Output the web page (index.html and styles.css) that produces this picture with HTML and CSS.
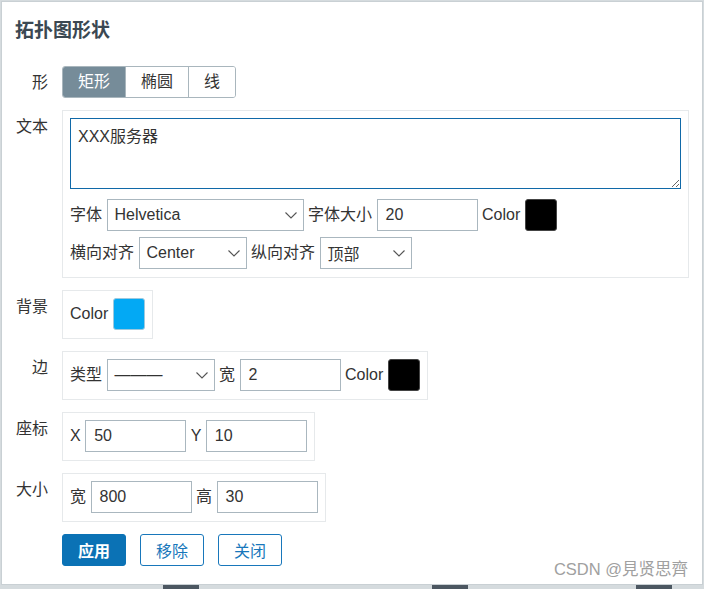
FILE: index.html
```html
<!DOCTYPE html>
<html lang="zh-CN">
<head>
<meta charset="utf-8">
<title>拓扑图形状</title>
<link rel="stylesheet" href="styles.css">
</head>
<body>
<div class="dialog">
  <h2 class="title">拓扑图形状</h2>
  <div class="form">
    <div class="row">
      <div class="label">形</div>
      <div class="seg">
        <button class="seg-btn active">矩形</button>
        <button class="seg-btn">椭圆</button>
        <button class="seg-btn">线</button>
      </div>
    </div>

    <div class="row">
      <div class="label">文本</div>
      <div class="box box-text">
        <textarea class="textarea">XXX服务器</textarea>
        <div class="line line-first">
          <span class="txt">字体</span>
          <div class="select w197"><span>Helvetica</span><svg class="chev" width="12" height="7" viewBox="0 0 12 7"><path d="M0.5 0.5 L6 6 L11.5 0.5" fill="none" stroke="#555" stroke-width="1.1"/></svg></div>
          <span class="txt">字体大小</span>
          <div class="input">20</div>
          <span class="txt">Color</span>
          <div class="swatch black"></div>
        </div>
        <div class="line line-second">
          <span class="txt">横向对齐</span>
          <div class="select w108"><span>Center</span><svg class="chev" width="12" height="7" viewBox="0 0 12 7"><path d="M0.5 0.5 L6 6 L11.5 0.5" fill="none" stroke="#555" stroke-width="1.1"/></svg></div>
          <span class="txt">纵向对齐</span>
          <div class="select w92"><span>顶部</span><svg class="chev" width="12" height="7" viewBox="0 0 12 7"><path d="M0.5 0.5 L6 6 L11.5 0.5" fill="none" stroke="#555" stroke-width="1.1"/></svg></div>
        </div>
      </div>
    </div>

    <div class="row">
      <div class="label">背景</div>
      <div class="box">
        <span class="txt">Color</span>
        <div class="swatch blue"></div>
      </div>
    </div>

    <div class="row">
      <div class="label">边</div>
      <div class="box">
        <span class="txt">类型</span>
        <div class="select w108"><span>———</span><svg class="chev" width="12" height="7" viewBox="0 0 12 7"><path d="M0.5 0.5 L6 6 L11.5 0.5" fill="none" stroke="#555" stroke-width="1.1"/></svg></div>
        <span class="txt">宽</span>
        <div class="input">2</div>
        <span class="txt">Color</span>
        <div class="swatch black"></div>
      </div>
    </div>

    <div class="row">
      <div class="label">座标</div>
      <div class="box">
        <span class="txt">X</span>
        <div class="input">50</div>
        <span class="txt">Y</span>
        <div class="input">10</div>
      </div>
    </div>

    <div class="row">
      <div class="label">大小</div>
      <div class="box">
        <span class="txt">宽</span>
        <div class="input">800</div>
        <span class="txt">高</span>
        <div class="input">30</div>
      </div>
    </div>

    <div class="row actions">
      <div class="label"></div>
      <button class="btn primary">应用</button>
      <button class="btn outline">移除</button>
      <button class="btn outline">关闭</button>
    </div>
  </div>
  <div class="watermark">CSDN @見贤思齊</div>
</div>
<div class="strip">
  <span class="blk b1"></span>
  <span class="blk b2"></span>
  <span class="blk b3"></span>
</div>
</body>
</html>
```

FILE: styles.css
```css
html, body {
  margin: 0;
  padding: 0;
}
body {
  width: 704px;
  height: 589px;
  overflow: hidden;
  background: #d5dbde;
  font-family: "Liberation Sans", "Noto Sans CJK SC", sans-serif;
  font-size: 16px;
  color: #333;
}
.dialog {
  position: relative;
  box-sizing: border-box;
  margin: 1px 1px 0 1px;
  width: 702px;
  height: 584px;
  background: #fff;
  border: 1px solid #c9d0d4;
  padding: 17px 14px 0 13px;
}
.title {
  margin: 0 0 23px 0;
  font-size: 19px;
  line-height: 24px;
  font-weight: bold;
  color: #3b4852;
}
.form {
  display: flex;
  flex-direction: column;
  gap: 12px;
  padding-left: 1px;
}
.row {
  display: flex;
  align-items: flex-start;
}
.label {
  width: 32px;
  flex-shrink: 0;
  margin-right: 14px;
  text-align: right;
  line-height: 20px;
  padding-top: 7px;
  color: #333;
}
.seg {
  display: flex;
  height: 32px;
  box-sizing: border-box;
  border: 1px solid #a9b6bd;
  border-radius: 3px;
  overflow: hidden;
}
.seg-btn {
  font-family: inherit;
  font-size: 16px;
  color: #333;
  background: #fff;
  border: 0;
  border-left: 1px solid #a9b6bd;
  padding: 0 15px;
  margin: 0;
  height: 30px;
  line-height: 30px;
}
.seg-btn:first-child {
  border-left: 0;
}
.seg-btn.active {
  background: #768c99;
  color: #fff;
}
.box {
  display: flex;
  align-items: center;
  gap: 4.5px;
  box-sizing: border-box;
  border: 1px solid #e6e9eb;
  padding: 7px 7px 8px 7px;
}
.box-text {
  width: 627px;
  flex-direction: column;
  align-items: flex-start;
  gap: 0;
}
.textarea {
  box-sizing: border-box;
  width: 611px;
  height: 71px;
  margin: 0;
  border: 1px solid #1069a8;
  padding: 8px 7px;
  font-family: inherit;
  font-size: 16px;
  line-height: 20px;
  color: #333;
  resize: vertical;
  outline: none;
}
.line {
  display: flex;
  align-items: center;
  gap: 4.5px;
}
.line-first {
  margin-top: 10px;
}
.line-second {
  margin-top: 6px;
}
.txt {
  line-height: 20px;
  white-space: nowrap;
}
.select {
  box-sizing: border-box;
  height: 32px;
  border: 1px solid #aab7bf;
  padding: 0 6px 0 7px;
  display: flex;
  align-items: center;
  justify-content: space-between;
  white-space: nowrap;
  color: #333;
}
.w197 { width: 197px; }
.w108 { width: 108px; }
.w92 { width: 92px; }
.chev {
  flex-shrink: 0;
}
.input {
  box-sizing: border-box;
  width: 101px;
  height: 32px;
  border: 1px solid #aab7bf;
  padding: 0 8px;
  line-height: 30px;
  color: #333;
}
.swatch {
  box-sizing: border-box;
  width: 32px;
  height: 32px;
  border-radius: 3px;
  border: 1px solid #b8c2c8;
}
.swatch.black {
  background: #000;
  border-color: #444;
}
.swatch.blue {
  background: #03a9f4;
  border-color: #9cc9df;
}
.actions {
  gap: 0;
  align-items: center;
}
.actions .label {
  padding-top: 0;
}
.btn {
  box-sizing: border-box;
  width: 64px;
  height: 32px;
  margin: 0 14px 0 0;
  padding: 0;
  border-radius: 3px;
  font-family: inherit;
  font-size: 16px;
}
.btn.primary {
  background: #0b72b5;
  border: 1px solid #0b72b5;
  color: #fff;
  font-weight: bold;
}
.btn.outline {
  background: #fff;
  border: 1px solid #1877bb;
  color: #1877bb;
}
.watermark {
  position: absolute;
  right: 14px;
  bottom: 5px;
  font-size: 16.5px;
  line-height: 20px;
  color: #a0a0a0;
  white-space: nowrap;
}
.strip {
  display: flex;
  height: 4px;
}
.blk {
  display: block;
  height: 4px;
  background: #4c5761;
}
.b1 { width: 36px; margin-left: 163px; }
.b2 { width: 36px; margin-left: 233px; }
.b3 { width: 36px; margin-left: 168px; }
```
